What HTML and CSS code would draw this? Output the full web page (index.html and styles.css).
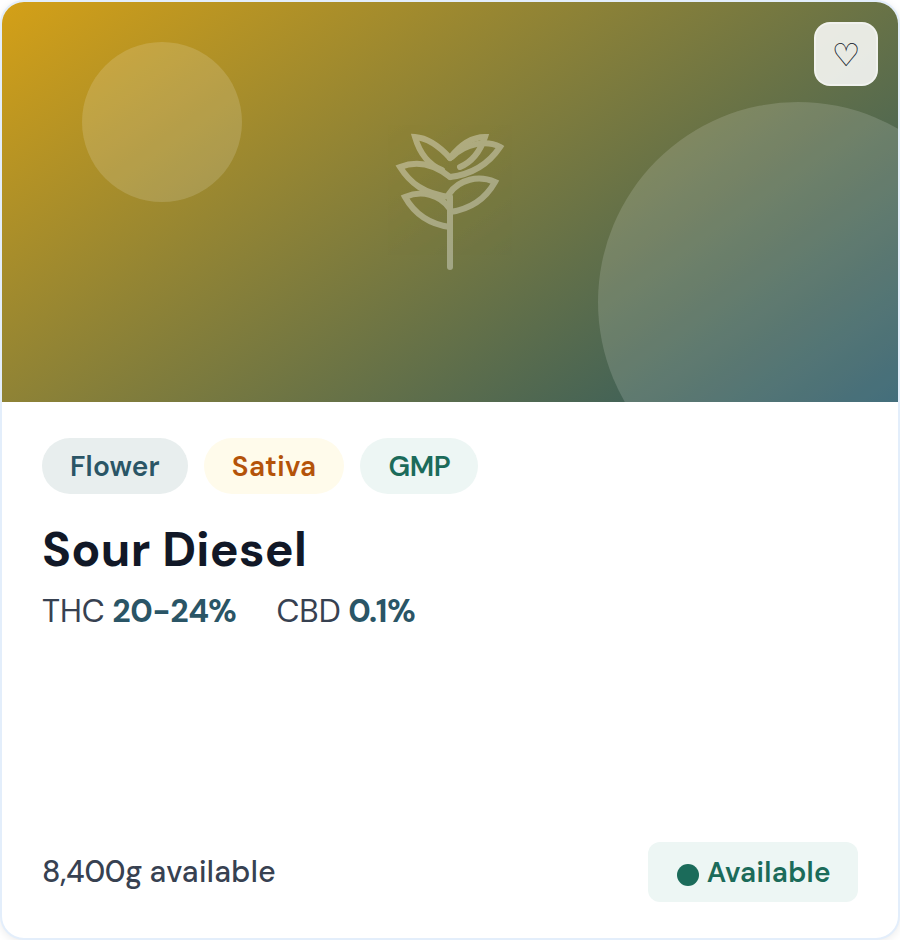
FILE: index.html
```html
<!DOCTYPE html>
<html lang="en">
<head>
    <meta charset="UTF-8">
    <meta name="viewport" content="width=device-width, initial-scale=1.0">
    <title>Sour Diesel</title>
    <link rel="stylesheet" href="styles.css">
</head>
<body>
    <div class="card">
        <div class="card-banner">
            <div class="circle circle-large"></div>
            <div class="circle circle-small"></div>
            <svg class="plant" viewBox="0 0 140 184" fill="none" stroke="white" stroke-width="6" stroke-linecap="round">
                <path d="M70 157V88"/>
                <path d="M70 117C48 114 34 103 25 87C41 80 60 84 70 99"/>
                <path d="M70 102C91 99 106 88 115 72C99 65 79 69 69 84"/>
                <path d="M70 87C44 84 30 73 20 57C38 50 55 55 70 67"/>
                <path d="M62 60C47 54 39 41 35 27C49 28 60 37 70 48"/>
                <path d="M70 67C94 64 110 52 120 37C107 30 86 33 72 47"/>
                <path d="M70 48C80 35 91 27 105 27C101 39 94 51 80 57"/>
            </svg>
            <button class="favorite">♡</button>
        </div>
        <div class="card-body">
            <div class="tags">
                <span class="tag tag-flower">Flower</span>
                <span class="tag tag-sativa">Sativa</span>
                <span class="tag tag-gmp">GMP</span>
            </div>
            <h2 class="name">Sour Diesel</h2>
            <div class="stats">
                <span class="thc">THC <strong>20-24%</strong></span>
                <span class="cbd">CBD <strong>0.1%</strong></span>
            </div>
            <div class="card-footer">
                <span class="stock">8,400g <span class="stock-label">available</span></span>
                <span class="status"><i class="dot"></i><span class="status-text">Available</span></span>
            </div>
        </div>
    </div>
</body>
</html>
```

FILE: styles.css
```css
* {
    box-sizing: border-box;
}
body {
    margin: 0;
    background: #fff;
    font-family: "DM Sans", Inter, sans-serif;
    color: #374151;
}
.card {
    display: flex;
    flex-direction: column;
    height: 940px;
    background: white;
    border: 2px solid #e3eefb;
    border-radius: 24px;
    overflow: hidden;
    box-shadow: 0 2px 8px rgba(0,0,0,0.08);
}
.card-banner {
    position: relative;
    display: flex;
    align-items: center;
    justify-content: center;
    height: 400px;
    flex-shrink: 0;
    overflow: hidden;
    background: linear-gradient(145deg, #d4a017, #235565);
}
.circle {
    position: absolute;
    border-radius: 50%;
    background: rgba(255,255,255,0.15);
}
.circle-large {
    width: 400px;
    height: 400px;
    right: -100px;
    bottom: -100px;
}
.circle-small {
    width: 160px;
    height: 160px;
    left: 80px;
    top: 40px;
}
.plant {
    width: 140px;
    height: 184px;
    opacity: 0.35;
}
.favorite {
    position: absolute;
    top: 20px;
    right: 20px;
    width: 64px;
    height: 64px;
    padding: 2px 0 0;
    border: 2px solid rgba(255,255,255,0.4);
    border-radius: 16px;
    background: rgba(255,255,255,0.85);
    color: #111827;
    font-family: "DejaVu Sans", sans-serif;
    font-size: 32px;
}
.card-body {
    display: flex;
    flex-direction: column;
    flex: 1;
    padding: 36px 40px;
}
.tags {
    display: flex;
    gap: 16px;
}
.tag {
    height: 56px;
    padding: 1px 28px 0;
    border-radius: 28px;
    font-size: 28px;
    font-weight: 600;
    line-height: 56px;
}
.tag-flower {
    background: #e8eeee;
    color: #2a5566;
    letter-spacing: 0.2px;
}
.tag-sativa {
    background: #fffbeb;
    color: #b45309;
    letter-spacing: 0.35px;
}
.tag-gmp {
    background: #edf6f4;
    color: #1b6b5a;
    letter-spacing: -0.4px;
}
.name {
    margin: 26px 0 0;
    color: #111827;
    font-size: 48px;
    line-height: 60px;
    letter-spacing: 0.28px;
}
.stats {
    display: flex;
    gap: 40px;
    margin-top: 10px;
    font-size: 32px;
    line-height: 42px;
    word-spacing: -1px;
}
.stats strong {
    color: #2a5566;
    letter-spacing: -0.4px;
}
.card-footer {
    display: flex;
    align-items: center;
    justify-content: space-between;
    margin-top: auto;
}
.stock {
    font-size: 30px;
    font-weight: 500;
    line-height: 38px;
    letter-spacing: -0.25px;
}
.stock-label {
    letter-spacing: 0.35px;
}
.status {
    display: flex;
    align-items: center;
    gap: 8px;
    height: 60px;
    padding: 0 27px 0 29px;
    border-radius: 12px;
    background: #edf6f4;
    color: #1b6b5a;
    font-size: 28px;
    font-weight: 600;
    letter-spacing: 0.35px;
    white-space: nowrap;
}
.dot {
    width: 22px;
    height: 22px;
    flex-shrink: 0;
    margin-top: 5px;
    border-radius: 50%;
    background: #1b6b5a;
}
```
